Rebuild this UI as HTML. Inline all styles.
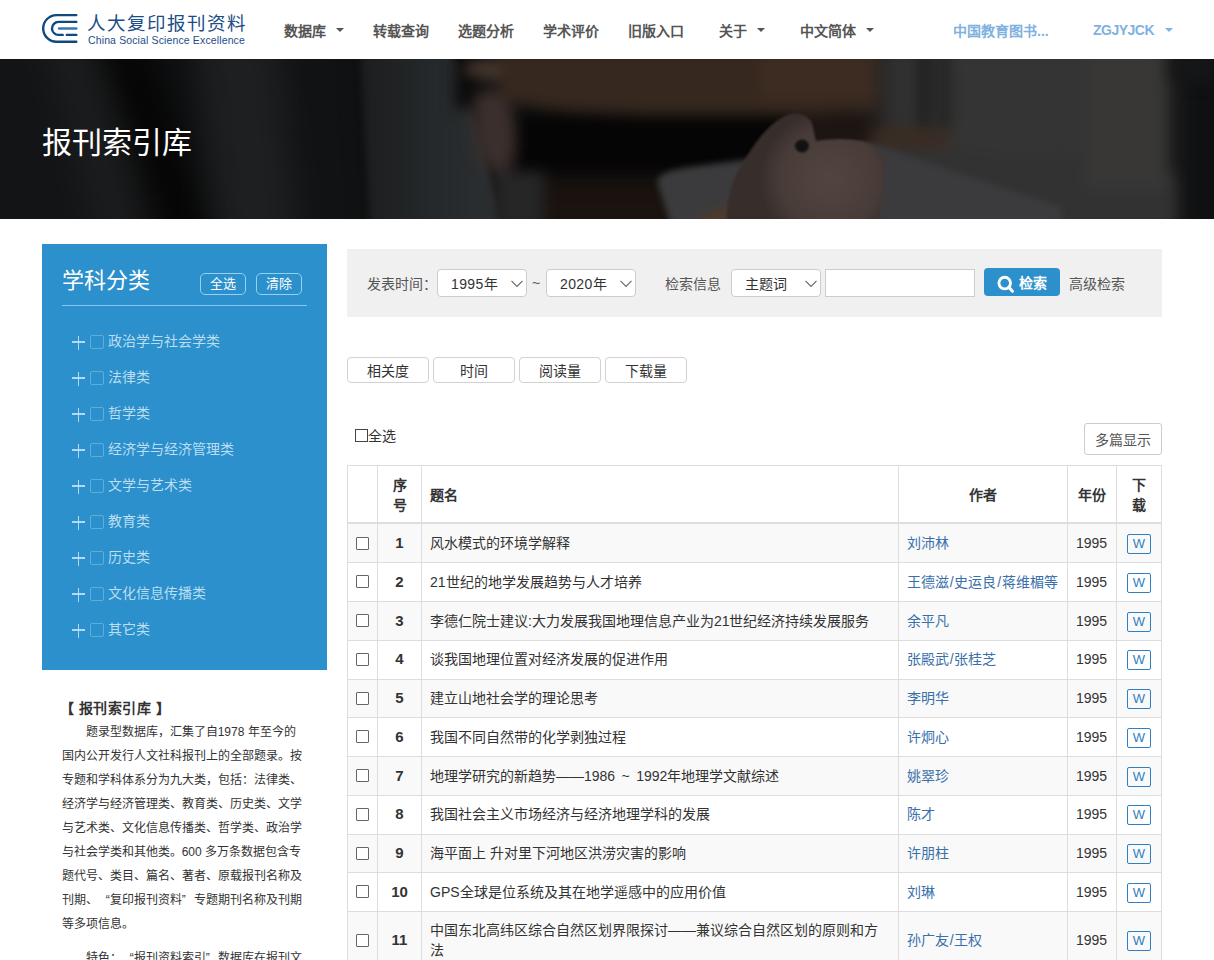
<!DOCTYPE html>
<html lang="zh-CN"><head><meta charset="utf-8">
<style>
*{box-sizing:border-box;margin:0;padding:0}
html,body{width:1214px;height:960px;overflow:hidden;background:#fff}
body{font-family:"Liberation Sans",sans-serif;color:#333;font-size:14px;position:relative}
.a{position:absolute;white-space:nowrap}
/* header */
.nav{font-weight:bold;color:#555;font-size:14px;top:21.5px;line-height:18px}
.caret{position:absolute;width:0;height:0;border-left:4px solid transparent;border-right:4px solid transparent;border-top:4px solid #555}
.navb{color:#7fb2df}
.hero{position:absolute;left:0;top:59px;width:1214px;height:160px;overflow:hidden;background:#151618}
.side{position:absolute;left:42px;top:244px;width:285px;height:426px;background:#2b90cb}

.side h2{position:absolute;left:20px;top:22px;font-size:22px;line-height:30px;font-weight:normal;color:#fff}
.sbtn{position:absolute;top:29px;width:46px;height:22px;border:1px solid #93d0f4;border-radius:5px;color:#fff;font-size:13px;line-height:20px;text-align:center}
.sline{position:absolute;left:20px;top:61px;width:245px;height:1px;background:#86c6ee}
.item{position:absolute;left:30px;height:20px;color:rgba(215,236,250,.85);font-size:14px;line-height:20px;white-space:nowrap}
.item .pl{position:absolute;left:0;top:3.5px;width:13px;height:13px}
.item .pl:before{content:"";position:absolute;left:0;top:5.6px;width:13px;height:1.8px;background:rgba(200,232,250,.85)}
.item .pl:after{content:"";position:absolute;left:5.6px;top:0;width:1.8px;height:14px;background:rgba(200,232,250,.85)}
.item .cb{position:absolute;left:18px;top:3px;width:14px;height:14px;border:1px solid rgba(255,255,255,.25);border-radius:2px}
.item span{position:absolute;left:36px;top:-1px}
.desc{position:absolute;margin-left:0.7px;font-size:12px;line-height:24px;color:#333;white-space:nowrap}
.search{position:absolute;left:347px;top:249px;width:815px;height:68px;background:#f0f0f0}
.lbl{position:absolute;font-size:14px;line-height:20px;color:#555;white-space:nowrap}
.sel{position:absolute;top:20px;height:28px;background:#fff;border:1px solid #ccc;border-radius:4px;font-size:14px;line-height:28px;color:#333;white-space:nowrap}
.sel span{position:absolute;top:0}
.sel svg{position:absolute;top:10px}
.sort{position:absolute;top:357px;width:82px;height:26px;border:1px solid #d2d2d2;border-radius:4px;background:#fff;font-size:14px;line-height:26px;text-align:center;color:#333}

.tbl{position:absolute;left:347px;top:465px;width:815px;height:520px;border:1px solid #ddd;border-bottom:none}
.vl{position:absolute;top:0;width:1px;height:520px;background:#ddd}
.hl{position:absolute;left:0;width:813px;height:1px;background:#ddd}
.row{position:absolute;left:0;width:813px}
.row.odd{background:#f9f9f9}
.c{position:absolute;white-space:nowrap;font-size:14px;line-height:20px}
.th{font-weight:bold;color:#333}
.num{font-weight:bold;color:#333;text-align:center;width:43px;left:30px;font-size:15px}
.tt{left:82px;color:#333}
.au{left:559px;color:#3a70aa}
.yr{left:719px;width:49px;text-align:center;color:#333}
.w{position:absolute;left:779px;width:24px;height:20px;border:1px solid #2f80c2;border-radius:2px;color:#2f80c2;font-size:13px;line-height:18px;text-align:center}
.tcb{position:absolute;left:8px;width:13px;height:13px;border:1px solid #666;border-radius:1px;background:#fff}
.ql{display:inline-block;width:12px;text-align:right}.qr{display:inline-block;width:12px;text-align:left}
</style></head>
<body>
<!-- header -->
<svg class="a" style="left:38px;top:10px" width="42" height="38" viewBox="0 0 42 38">
  <g fill="none" stroke="#0d4a80" stroke-width="2.4" stroke-linecap="round">
    <path d="M38.3 5.1 H18.5 A13.3 13.3 0 0 0 18.5 31.7 H38.3"/>
    <path d="M38.3 11.9 H20.5 A6.5 6.5 0 0 0 20.5 24.9 H24.7"/>
    <path d="M28.8 24.9 H38.3"/>
  </g>
  <path d="M21 18.5 H38.3" stroke="#3a78b0" stroke-width="2.4" stroke-linecap="round"/>
</svg>
<div class="a" style="left:87px;top:13px;font-size:18.5px;line-height:22px;color:#1b4d88;letter-spacing:1.05px">人大复印报刊资料</div>
<div class="a" style="left:88px;top:34px;font-size:10.5px;line-height:12px;color:#1b4d88;letter-spacing:0.13px">China Social Science Excellence</div>

<div class="a nav" style="left:284px">数据库</div><div class="caret" style="left:336px;top:28px"></div>
<div class="a nav" style="left:373px">转载查询</div>
<div class="a nav" style="left:458px">选题分析</div>
<div class="a nav" style="left:543px">学术评价</div>
<div class="a nav" style="left:628px">旧版入口</div>
<div class="a nav" style="left:719px">关于</div><div class="caret" style="left:757px;top:28px"></div>
<div class="a nav" style="left:800px">中文简体</div><div class="caret" style="left:866px;top:28px"></div>
<div class="a nav navb" style="left:953px">中国教育图书...</div>
<div class="a nav navb" style="left:1093px;top:20.5px;letter-spacing:-0.5px">ZGJYJCK</div><div class="caret" style="left:1165px;top:28px;border-top-color:#7fb2df"></div>

<!-- hero -->
<div class="hero">
<svg width="1214" height="160" viewBox="0 0 1214 160" style="position:absolute;left:0;top:0">
<defs>
<filter id="b1" color-interpolation-filters="sRGB" filterUnits="userSpaceOnUse" x="-200" y="-200" width="1614" height="560"><feGaussianBlur stdDeviation="16"/></filter>
<filter id="b2" color-interpolation-filters="sRGB" filterUnits="userSpaceOnUse" x="-200" y="-200" width="1614" height="560"><feGaussianBlur stdDeviation="7"/></filter>
<filter id="b3" color-interpolation-filters="sRGB" filterUnits="userSpaceOnUse" x="-200" y="-200" width="1614" height="560"><feGaussianBlur stdDeviation="3"/></filter>
<filter id="b4" color-interpolation-filters="sRGB" filterUnits="userSpaceOnUse" x="-200" y="-200" width="1614" height="560"><feGaussianBlur stdDeviation="1.3"/></filter>
<linearGradient id="sh" gradientUnits="userSpaceOnUse" x1="360" y1="0" x2="500" y2="0">
<stop offset="0" stop-color="#1b1d1e"/><stop offset="0.5" stop-color="#25282a"/><stop offset="1" stop-color="#2d3032"/>
</linearGradient>
<radialGradient id="fist" gradientUnits="userSpaceOnUse" cx="830" cy="120" r="70">
<stop offset="0" stop-color="#524441"/><stop offset="0.7" stop-color="#483c39"/><stop offset="1" stop-color="#372e2c"/>
</radialGradient>
</defs>
<rect width="1214" height="160" fill="#0d0e0f"/>
<g filter="url(#b1)">
<rect x="-50" y="-50" width="200" height="260" fill="#131415"/>
<path d="M40 -30 L90 -30 L150 190 L100 190 Z" fill="#1b1c1d"/>
<path d="M95 -30 L135 -30 L215 190 L170 190 Z" fill="#040404"/>
<path d="M190 -30 L280 -30 L300 190 L215 190 Z" fill="#1d1f20"/>
<path d="M285 -30 L360 -30 L375 190 L300 190 Z" fill="#111213"/>
<rect x="870" y="-30" width="300" height="230" fill="#313131"/>
<rect x="1178" y="-30" width="80" height="230" fill="#0f1011"/>
<rect x="500" y="115" width="200" height="70" fill="#1b130f"/>
</g>
<g filter="url(#b3)">
<path d="M360 -10 L455 -10 Q482 70 503 170 L370 170 Z" fill="url(#sh)"/>
</g>
<g filter="url(#b2)">
<rect x="455" y="-10" width="30" height="60" fill="#0b0b0b"/>
<path d="M462 10 Q466 0 495 0 L600 2 L600 26 Q540 26 500 22 Q470 20 462 10 Z" fill="#46372f"/>
<path d="M472 44 Q478 28 498 32 Q518 42 516 92 Q512 114 496 114 Q478 106 474 82 Z" fill="#3a2f2c"/>
<path d="M500 -10 L878 -10 L878 52 Q760 62 600 54 Q540 52 500 40 Z" fill="#36281f"/>
<rect x="760" y="-10" width="118" height="50" fill="#3d2c22"/>
<rect x="518" y="56" width="290" height="58" fill="#060505"/>
<rect x="790" y="58" width="90" height="50" fill="#1d1511"/>
<rect x="494" y="112" width="50" height="60" fill="#262627"/>
<rect x="950" y="-10" width="140" height="110" fill="#343434"/>
<path d="M870 80 L1175 115 L1175 170 L870 170 Z" fill="#323233"/>
<rect x="920" y="-10" width="8" height="84" fill="#161616"/>
<rect x="941" y="-10" width="7" height="84" fill="#191919"/>
<path d="M1130 -10 L1214 -10 L1214 25 L1160 22 Z" fill="#151617"/><rect x="1086" y="-10" width="80" height="140" fill="#383736"/><rect x="870" y="68" width="80" height="22" fill="#3a2c24"/>
</g>
<g filter="url(#b3)">
<path d="M657 122 Q660 112 690 108 L870 84 L1062 148 L1062 170 L672 170 Z" fill="#3b3b3d"/>
<path d="M690 170 Q700 150 730 146 L760 170 Z" fill="#4a3a2f"/>
</g>
<g filter="url(#b4)">
<path d="M727 165 Q725 130 745 100 Q768 62 790 55 Q806 52 812 64 L816 82 Q840 78 862 82 Q884 88 886 106 Q884 130 878 165 Z" fill="url(#fist)"/>
<ellipse cx="802" cy="87" rx="7" ry="6.5" fill="#121212"/>
</g>
</svg>
</div>
<div class="a" style="left:42px;top:123px;font-size:30px;line-height:40px;color:#fff">报刊索引库</div>

<!-- sidebar -->
<div class="side">
<h2>学科分类</h2>
<div class="sbtn" style="left:158px">全选</div>
<div class="sbtn" style="left:214px">清除</div>
<div class="sline"></div>
<div class="item" style="top:88px"><i class="pl"></i><i class="cb"></i><span>政治学与社会学类</span></div>
<div class="item" style="top:124px"><i class="pl"></i><i class="cb"></i><span>法律类</span></div>
<div class="item" style="top:160px"><i class="pl"></i><i class="cb"></i><span>哲学类</span></div>
<div class="item" style="top:196px"><i class="pl"></i><i class="cb"></i><span>经济学与经济管理类</span></div>
<div class="item" style="top:232px"><i class="pl"></i><i class="cb"></i><span>文学与艺术类</span></div>
<div class="item" style="top:268px"><i class="pl"></i><i class="cb"></i><span>教育类</span></div>
<div class="item" style="top:304px"><i class="pl"></i><i class="cb"></i><span>历史类</span></div>
<div class="item" style="top:340px"><i class="pl"></i><i class="cb"></i><span>文化信息传播类</span></div>
<div class="item" style="top:376px"><i class="pl"></i><i class="cb"></i><span>其它类</span></div>
</div>
<div class="a" style="left:60px;top:698px;font-size:14px;line-height:20px;font-weight:bold;color:#333;letter-spacing:0.5px">【 报刊索引库 】</div>
<div class="desc" style="left:85px;top:720px">题录型数据库，汇集了自1978 年至今的</div>
<div class="desc" style="left:61px;top:744px">国内公开发行人文社科报刊上的全部题录。按</div>
<div class="desc" style="left:61px;top:768px">专题和学科体系分为九大类，包括：法律类、</div>
<div class="desc" style="left:61px;top:792px">经济学与经济管理类、教育类、历史类、文学</div>
<div class="desc" style="left:61px;top:816px">与艺术类、文化信息传播类、哲学类、政治学</div>
<div class="desc" style="left:61px;top:840px">与社会学类和其他类。600 多万条数据包含专</div>
<div class="desc" style="left:61px;top:864px">题代号、类目、篇名、著者、原载报刊名称及</div>
<div class="desc" style="left:61px;top:888px">刊期、<span class="ql">“</span>复印报刊资料<span class="qr">”</span>专题期刊名称及刊期</div>
<div class="desc" style="left:61px;top:912px">等多项信息。</div>
<div class="desc" style="left:85px;top:946px">特色：<span class="ql">“</span>报刊资料索引<span class="qr">”</span>数据库在报刊文</div>
<div class="search">
<div class="lbl" style="left:20px;top:25px">发表时间：</div>
<div class="sel" style="left:90px;width:90px"><span style="left:13px;letter-spacing:0.4px">1995年</span><svg style="left:73px" width="12" height="8" viewBox="0 0 12 8"><path d="M0.5 0.8 L6 6.5 L11.5 0.8" fill="none" stroke="#666" stroke-width="1.1"/></svg></div>
<div class="lbl" style="left:185px;top:24px">~</div>
<div class="sel" style="left:199px;width:90px"><span style="left:13px;letter-spacing:0.4px">2020年</span><svg style="left:73px" width="12" height="8" viewBox="0 0 12 8"><path d="M0.5 0.8 L6 6.5 L11.5 0.8" fill="none" stroke="#666" stroke-width="1.1"/></svg></div>
<div class="lbl" style="left:318px;top:25px">检索信息</div>
<div class="sel" style="left:384px;width:90px"><span style="left:13px">主题词</span><svg style="left:73px" width="12" height="8" viewBox="0 0 12 8"><path d="M0.5 0.8 L6 6.5 L11.5 0.8" fill="none" stroke="#666" stroke-width="1.1"/></svg></div>
<div class="sel" style="left:478px;width:150px;border-radius:0"></div>
<div style="position:absolute;left:637px;top:19px;width:76px;height:28px;background:#2b90cb;border-radius:4px;color:#fff;font-weight:bold;font-size:14px;line-height:30px">
<svg style="position:absolute;left:12px;top:7px" width="19" height="19" viewBox="0 0 19 19"><circle cx="8.7" cy="8.1" r="5.8" fill="none" stroke="#fff" stroke-width="2.9"/><path d="M12.8 12.4 L16.5 16.2" stroke="#fff" stroke-width="3" stroke-linecap="round"/></svg>
<span style="position:absolute;left:35px;top:0">检索</span></div>
<div class="lbl" style="left:722px;top:25px">高级检索</div>
</div>
<div class="sort" style="left:347px">相关度</div>
<div class="sort" style="left:433px">时间</div>
<div class="sort" style="left:519px">阅读量</div>
<div class="sort" style="left:605px">下载量</div>

<div class="a" style="left:355px;top:429px;width:13px;height:13px;border:1px solid #444;background:#fff"></div>
<div class="a" style="left:368px;top:426px;font-size:14px;line-height:20px;color:#333">全选</div>
<div class="a" style="left:1084px;top:423px;width:78px;height:32px;border:1px solid #ccc;border-radius:3px;font-size:14px;line-height:32px;text-align:center;color:#555">多篇显示</div>
<div class="tbl">
<div class="row odd" style="top:58.00px;height:38.75px"></div>
<div class="row" style="top:96.75px;height:38.75px"></div>
<div class="row odd" style="top:135.50px;height:38.75px"></div>
<div class="row" style="top:174.25px;height:38.75px"></div>
<div class="row odd" style="top:213.00px;height:38.75px"></div>
<div class="row" style="top:251.75px;height:38.75px"></div>
<div class="row odd" style="top:290.50px;height:38.75px"></div>
<div class="row" style="top:329.25px;height:38.75px"></div>
<div class="row odd" style="top:368.00px;height:38.75px"></div>
<div class="row" style="top:406.75px;height:38.75px"></div>
<div class="row odd" style="top:445.50px;height:60.00px"></div>
<div class="hl" style="top:56px;height:2px"></div>
<div class="hl" style="top:96.35px"></div>
<div class="hl" style="top:135.10px"></div>
<div class="hl" style="top:173.85px"></div>
<div class="hl" style="top:212.60px"></div>
<div class="hl" style="top:251.35px"></div>
<div class="hl" style="top:290.10px"></div>
<div class="hl" style="top:328.85px"></div>
<div class="hl" style="top:367.60px"></div>
<div class="hl" style="top:406.35px"></div>
<div class="hl" style="top:445.10px"></div>
<div class="vl" style="left:29px"></div>
<div class="vl" style="left:73px"></div>
<div class="vl" style="left:550px"></div>
<div class="vl" style="left:719px"></div>
<div class="vl" style="left:768px"></div>
<div class="vl" style="left:813px"></div>
<div class="c th" style="left:30px;width:43px;text-align:center;top:10px;line-height:19.5px">序<br>号</div>
<div class="c th" style="left:82px;top:19px">题名</div>
<div class="c th" style="left:550px;width:169px;text-align:center;top:19px">作者</div>
<div class="c th" style="left:719px;width:49px;text-align:center;top:19px">年份</div>
<div class="c th" style="left:768px;width:45px;text-align:center;top:10px;line-height:19.5px">下<br>载</div>
<i class="tcb" style="top:70.50px"></i><div class="c num" style="top:67.00px">1</div><div class="c tt" style="top:67.00px">风水模式的环境学解释</div><div class="c au" style="top:67.00px">刘沛林</div><div class="c yr" style="top:67.00px">1995</div><div class="w" style="top:68.00px">W</div>
<i class="tcb" style="top:109.25px"></i><div class="c num" style="top:105.75px">2</div><div class="c tt" style="top:105.75px">21世纪的地学发展趋势与人才培养</div><div class="c au" style="top:105.75px">王德滋<span style="margin:0 0.8px">/</span>史运良<span style="margin:0 0.8px">/</span>蒋维楣等</div><div class="c yr" style="top:105.75px">1995</div><div class="w" style="top:106.75px">W</div>
<i class="tcb" style="top:148.00px"></i><div class="c num" style="top:144.50px">3</div><div class="c tt" style="top:144.50px">李德仁院士建议:大力发展我国地理信息产业为21世纪经济持续发展服务</div><div class="c au" style="top:144.50px">余平凡</div><div class="c yr" style="top:144.50px">1995</div><div class="w" style="top:145.50px">W</div>
<i class="tcb" style="top:186.75px"></i><div class="c num" style="top:183.25px">4</div><div class="c tt" style="top:183.25px">谈我国地理位置对经济发展的促进作用</div><div class="c au" style="top:183.25px">张殿武<span style="margin:0 0.8px">/</span>张桂芝</div><div class="c yr" style="top:183.25px">1995</div><div class="w" style="top:184.25px">W</div>
<i class="tcb" style="top:225.50px"></i><div class="c num" style="top:222.00px">5</div><div class="c tt" style="top:222.00px">建立山地社会学的理论思考</div><div class="c au" style="top:222.00px">李明华</div><div class="c yr" style="top:222.00px">1995</div><div class="w" style="top:223.00px">W</div>
<i class="tcb" style="top:264.25px"></i><div class="c num" style="top:260.75px">6</div><div class="c tt" style="top:260.75px">我国不同自然带的化学剥独过程</div><div class="c au" style="top:260.75px">许炯心</div><div class="c yr" style="top:260.75px">1995</div><div class="w" style="top:261.75px">W</div>
<i class="tcb" style="top:303.00px"></i><div class="c num" style="top:299.50px">7</div><div class="c tt" style="top:299.50px">地理学研究的新趋势——1986<span style="display:inline-block;width:21px;text-align:center">~</span>1992年地理学文献综述</div><div class="c au" style="top:299.50px">姚翠珍</div><div class="c yr" style="top:299.50px">1995</div><div class="w" style="top:300.50px">W</div>
<i class="tcb" style="top:341.75px"></i><div class="c num" style="top:338.25px">8</div><div class="c tt" style="top:338.25px">我国社会主义市场经济与经济地理学科的发展</div><div class="c au" style="top:338.25px">陈才</div><div class="c yr" style="top:338.25px">1995</div><div class="w" style="top:339.25px">W</div>
<i class="tcb" style="top:380.50px"></i><div class="c num" style="top:377.00px">9</div><div class="c tt" style="top:377.00px">海平面上 升对里下河地区洪涝灾害的影响</div><div class="c au" style="top:377.00px">许朋柱</div><div class="c yr" style="top:377.00px">1995</div><div class="w" style="top:378.00px">W</div>
<i class="tcb" style="top:419.25px"></i><div class="c num" style="top:415.75px">10</div><div class="c tt" style="top:415.75px">GPS全球是位系统及其在地学遥感中的应用价值</div><div class="c au" style="top:415.75px">刘琳</div><div class="c yr" style="top:415.75px">1995</div><div class="w" style="top:416.75px">W</div>
<i class="tcb" style="top:467.50px"></i><div class="c num" style="top:464.00px">11</div><div class="c tt" style="top:454.00px">中国东北高纬区综合自然区划界限探讨——兼议综合自然区划的原则和方<br>法</div><div class="c au" style="top:464.00px">孙广友<span style="margin:0 0.8px">/</span>王权</div><div class="c yr" style="top:464.00px">1995</div><div class="w" style="top:464.50px">W</div>
</div>
</body></html>
